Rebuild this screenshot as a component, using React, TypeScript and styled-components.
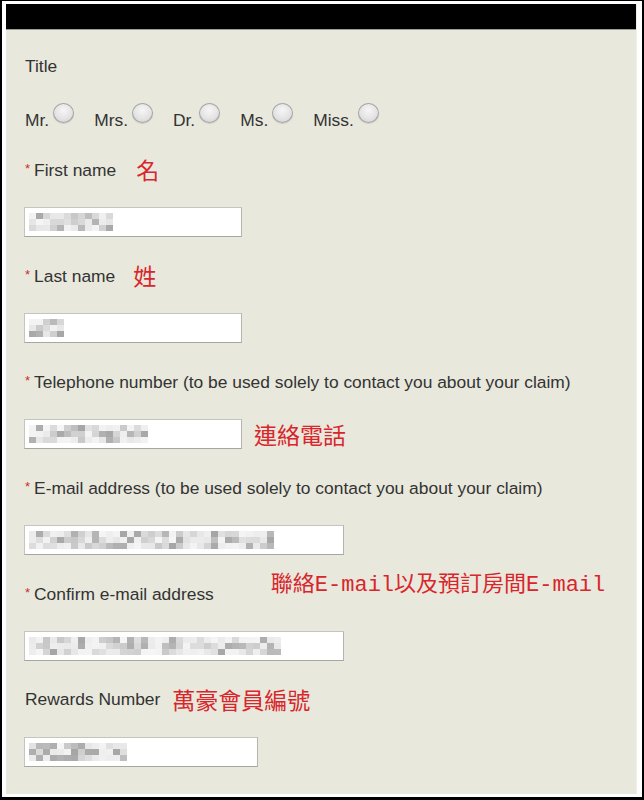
import React from "react";
import styled, { createGlobalStyle } from "styled-components";

const GlobalStyle = createGlobalStyle`
  html, body {
    margin: 0;
    padding: 0;
    background: #ffffff;
  }
  body {
    font-family: "Liberation Sans", Arial, sans-serif;
  }
`;

interface IField {
  label: string;
  required: boolean;
  note?: string;
  noteGap?: number;
  inputNote?: string;
  width: number;
  cols: number;
  seed: number;
}

const fields: IField[] = [
  { label: "First name", required: true, note: "名", noteGap: 20, width: 218, cols: 12, seed: 3 },
  { label: "Last name", required: true, note: "姓", noteGap: 18, width: 218, cols: 5, seed: 11 },
  {
    label: "Telephone number (to be used solely to contact you about your claim)",
    required: true,
    inputNote: "連絡電話",
    width: 218,
    cols: 17,
    seed: 23,
  },
  {
    label: "E-mail address (to be used solely to contact you about your claim)",
    required: true,
    width: 320,
    cols: 35,
    seed: 41,
  },
  { label: "Confirm e-mail address", required: true, width: 320, cols: 36, seed: 57 },
  { label: "Rewards Number", required: false, note: "萬豪會員編號", noteGap: 12, width: 234, cols: 14, seed: 71 },
];

const titles = ["Mr.", "Mrs.", "Dr.", "Ms.", "Miss."];

// pseudo random grey for the blurred (pixelated) values
const shade = (seed: number, i: number) => {
  const v = Math.abs(Math.sin(seed * 91.7 + i * 12.9898) * 43758.5453) % 1;
  let g: number;
  if (v < 0.45) g = 226 + Math.round(v * 40);
  else if (v < 0.8) g = 190 + Math.round((v - 0.45) * 90);
  else g = 150 + Math.round((v - 0.8) * 150);
  return `rgb(${g},${g},${g})`;
};

const Mosaic: React.FC<{ cols: number; seed: number }> = ({ cols, seed }) => (
  <MosaicGrid $cols={cols}>
    {Array.from({ length: cols * 3 }).map((_, i) => (
      <Cell key={i} style={{ background: shade(seed, i) }} />
    ))}
  </MosaicGrid>
);

export default function App() {
  return (
    <>
      <GlobalStyle />
      <Frame>
        <Panel>
          <Header />
          <Body>
            <Label>Title</Label>
            <RadioRow>
              {titles.map((t) => (
                <RadioItem key={t}>
                  <RadioText>{t}</RadioText>
                  <Radio />
                </RadioItem>
              ))}
            </RadioRow>

            {fields.map((f, idx) => (
              <Field key={f.label}>
                <LabelRow>
                  <Label>
                    {f.required && <Star>*</Star>}
                    {f.label}
                  </Label>
                  {f.note && <Note $gap={f.noteGap ?? 14}>{f.note}</Note>}
                  {idx === 4 && <EmailNote>聯絡E-mail以及預訂房間E-mail</EmailNote>}
                </LabelRow>
                <InputRow>
                  <TextBox $width={f.width}>
                    <Mosaic cols={f.cols} seed={f.seed} />
                  </TextBox>
                  {f.inputNote && <InputNote>{f.inputNote}</InputNote>}
                </InputRow>
              </Field>
            ))}
          </Body>
        </Panel>
      </Frame>
    </>
  );
}

const Frame = styled.div`
  width: 644px;
  height: 800px;
  box-sizing: border-box;
  border-top: 1px solid #000;
  border-left: 2px solid #000;
  border-right: 2px solid #000;
  border-bottom: 3px solid #000;
  padding: 3px 5px 3px 4px;
  background: #fff;
`;

const Panel = styled.div`
  height: 100%;
  background: #e8e8dc;
  display: flex;
  flex-direction: column;
  border-right: 1px solid #efefe6;
`;

const Header = styled.div`
  height: 25px;
  background: #000;
  border-bottom: 1px solid #9c9c90;
  flex-shrink: 0;
`;

const Body = styled.div`
  padding: 24px 0 0 18px;
  display: flex;
  flex-direction: column;
`;

const Label = styled.div`
  font-size: 17.4px;
  line-height: 24px;
  height: 24px;
  color: #333;
  padding-left: 1px;
  white-space: nowrap;
`;

const Star = styled.span`
  color: #c8302c;
  font-size: 13px;
  vertical-align: 3px;
  margin-right: 4px;
`;

const RadioRow = styled.div`
  display: flex;
  align-items: flex-start;
  margin-top: 25px;
  padding-left: 1px;
  gap: 20px;
`;

const RadioItem = styled.div`
  display: flex;
  align-items: flex-start;
  gap: 4px;
`;

const RadioText = styled.span`
  font-size: 17.4px;
  line-height: 24px;
  color: #333;
  margin-top: 5px;
`;

const Radio = styled.span`
  width: 21px;
  height: 20px;
  box-sizing: border-box;
  border-radius: 50%;
  border: 1px solid #a4a4a4;
  background: radial-gradient(circle at 50% 35%, #f6f6f6 0%, #e4e4e4 55%, #cfcfcf 100%);
  box-shadow: 0 1px 1px rgba(0, 0, 0, 0.12);
`;

const Field = styled.div`
  display: flex;
  flex-direction: column;
  margin-top: 25px;
  & + & {
    margin-top: 26px;
  }
`;

const LabelRow = styled.div`
  display: flex;
  align-items: center;
  height: 24px;
`;

const Note = styled.span<{ $gap: number }>`
  font-family: "Noto Sans CJK TC", "Noto Sans CJK SC", sans-serif;
  font-size: 23px;
  line-height: 24px;
  color: #d8262c;
  margin-left: ${(p) => p.$gap}px;
`;

const EmailNote = styled.span`
  font-family: "Liberation Mono", "Noto Sans CJK TC", monospace;
  font-size: 22px;
  line-height: 26px;
  color: #d8262c;
  align-self: flex-start;
  margin-top: -8px;
  margin-left: 57px;
  white-space: nowrap;
`;

const InputRow = styled.div`
  display: flex;
  align-items: center;
  margin-top: 26px;
`;

const TextBox = styled.div<{ $width: number }>`
  width: ${(p) => p.$width}px;
  height: 30px;
  box-sizing: border-box;
  background: #fff;
  border: 1px solid #c4c4c0;
  border-bottom-color: #a6a6a2;
  border-right-color: #b4b4b0;
  display: flex;
  align-items: center;
  padding-left: 4px;
  overflow: hidden;
`;

const MosaicGrid = styled.div<{ $cols: number }>`
  display: grid;
  grid-template-columns: repeat(${(p) => p.$cols}, 7px);
  grid-auto-rows: 6px;
  opacity: 0.85;
`;

const Cell = styled.span`
  display: block;
`;

const InputNote = styled.span`
  font-family: "Noto Sans CJK TC", "Noto Sans CJK SC", sans-serif;
  font-size: 23px;
  line-height: 30px;
  color: #d8262c;
  margin-left: 12px;
`;
